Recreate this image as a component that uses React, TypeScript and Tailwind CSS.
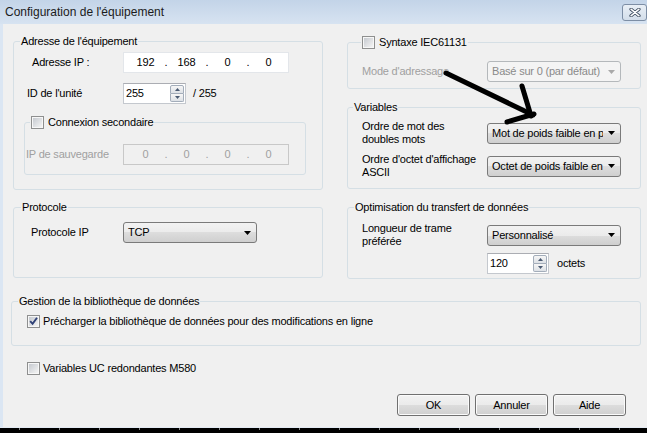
import React from "react";

const comboBg =
  "bg-[linear-gradient(to_bottom,#f2f2f2_0%,#ebebeb_50%,#dddddd_50%,#cfcfcf_100%)]";

function Check({ checked = false }: { checked?: boolean }) {
  return (
    <span className="flex h-[13px] w-[13px] shrink-0 items-center justify-center border border-[#8e8f8f] bg-[#f7f7f7]">
      <span className="relative h-[9px] w-[9px] bg-[linear-gradient(135deg,#c6cad0,#f4f4f4)]">
        {checked && (
          <svg className="absolute left-0 top-0" width="9" height="9" viewBox="0 0 9 9">
            <path d="M1.2 4.2L3.6 6.8L8 0.8" fill="none" stroke="#2f4177" strokeWidth="1.9" />
          </svg>
        )}
      </span>
    </span>
  );
}

function Spin() {
  return (
    <span className="flex w-[16px] shrink-0 flex-col p-px">
      <span className="flex flex-1 items-center justify-center rounded-t-[2px] border border-[#a3adba] bg-[linear-gradient(#f6f6f6,#dde1e6)]">
        <svg width="5" height="3" viewBox="0 0 5 3">
          <path d="M0 3L2.5 0L5 3Z" fill="#4a5a72" />
        </svg>
      </span>
      <span className="flex flex-1 items-center justify-center rounded-b-[2px] border border-t-0 border-[#a3adba] bg-[linear-gradient(#f6f6f6,#dde1e6)]">
        <svg width="5" height="3" viewBox="0 0 5 3">
          <path d="M0 0H5L2.5 3Z" fill="#4a5a72" />
        </svg>
      </span>
    </span>
  );
}

function NumBox({ value, className }: { value: string; className: string }) {
  return (
    <div className={`flex h-[21px] items-stretch border border-[#c4c8ce] border-t-[#abadb3] bg-white ${className}`}>
      <span className="flex flex-1 items-center pl-[2px]">{value}</span>
      <Spin />
    </div>
  );
}

function IpBox({ parts, disabled = false }: { parts: string[]; disabled?: boolean }) {
  return (
    <div
      className={`grid h-[21px] w-[166px] grid-cols-[1fr_4px_1fr_4px_1fr_4px_1fr] items-center pl-[3px] pr-px text-center ${
        disabled ? "border border-[#c8c8c8] bg-[#f0f0f0] text-[#a0a0a0]" : "border border-[#e3e6ea] bg-white"
      }`}
    >
      {parts.map((p, i) => (
        <React.Fragment key={i}>
          {i > 0 && <span>.</span>}
          <span>{p}</span>
        </React.Fragment>
      ))}
    </div>
  );
}

function Combo({ value, className, disabled = false }: { value: string; className: string; disabled?: boolean }) {
  return (
    <div
      className={`flex h-[21px] shrink-0 items-center rounded-[3px] border ${className} ${
        disabled ? "border-[#b4b8bb] bg-[#f4f4f4] text-[#8a8a8a]" : `border-[#7a7a7a] ${comboBg}`
      }`}
    >
      <span className="min-w-0 flex-1 overflow-hidden whitespace-nowrap pl-[4px]">{value}</span>
      <span className="flex w-[17px] shrink-0 justify-center">
        <svg width="7" height="4" viewBox="0 0 7 4">
          <path d="M0 0H7L3.5 4Z" fill={disabled ? "#a9a9a9" : "#000"} />
        </svg>
      </span>
    </div>
  );
}

function Group({
  legend,
  legendClass,
  className,
  children,
}: {
  legend: React.ReactNode;
  legendClass: string;
  className: string;
  children: React.ReactNode;
}) {
  return (
    <fieldset className={`shrink-0 rounded-[3px] border border-[#d5dfe5] ${className}`}>
      <legend className={`px-px ${legendClass}`}>
        <span className="flex h-[13px] items-center">{legend}</span>
      </legend>
      {children}
    </fieldset>
  );
}

function Btn({ children }: { children: React.ReactNode }) {
  return (
    <button
      className={`flex h-[22px] w-[73px] items-center justify-center rounded-[3px] border border-[#707070] shadow-[inset_0_0_0_1px_#fbfbfb] ${comboBg}`}
    >
      {children}
    </button>
  );
}

export default function App() {
  return (
    <div className="relative flex h-[433px] w-[647px] flex-col overflow-hidden bg-[#f0f0f0] font-['Liberation_Sans',Arial,sans-serif] text-[11px] leading-[13px] tracking-[-0.2px] text-black">
      {/* title bar */}
      <div className="flex h-[24px] shrink-0 items-center bg-[linear-gradient(to_bottom,#c3d4e8,#d7e3f1)] pl-[5px]">
        <span className="flex-1 text-[12px] tracking-[0px] text-[#1b1b1b]">Configuration de l'équipement</span>
        <span className="flex h-[17px] w-[25px] items-center justify-center rounded-[3px] border border-[#7d8ea5] bg-[linear-gradient(#e9eff6,#d3deea)]">
          <svg width="12" height="9" viewBox="0 0 12 9">
            <path d="M2 1.2L10 7.8M10 1.2L2 7.8" stroke="#3b4a5d" strokeWidth="3.2" strokeLinecap="round" />
            <path d="M2 1.2L10 7.8M10 1.2L2 7.8" stroke="#fff" strokeWidth="1.5" strokeLinecap="round" />
          </svg>
        </span>
      </div>

      {/* body */}
      <div className="flex flex-1 flex-col border-l-[3px] border-[#dbe6f3]">
        <div className="mt-[11px] flex gap-[24px] pl-[10px]">
          {/* left column */}
          <div className="flex w-[310px] flex-col gap-[11px]">
            <Group legend="Adresse de l'équipement" legendClass="ml-[6px]" className="h-[155px] w-[310px]">
              <div className="mt-[4px] flex h-[21px] items-center">
                <span className="w-[109px] shrink-0 pl-[18px]">Adresse IP :</span>
                <IpBox parts={["192", "168", "0", "0"]} />
              </div>
              <div className="mt-[10px] flex h-[21px] items-center">
                <span className="w-[109px] shrink-0 pl-[13px]">ID de l'unité</span>
                <NumBox value="255" className="w-[63px]" />
                <span className="ml-[7px]">/ 255</span>
              </div>
              <Group
                legend={
                  <>
                    <Check />
                    <span className="ml-[4px]">Connexion secondaire</span>
                  </>
                }
                legendClass="ml-[5px]"
                className="ml-[10px] mt-[12px] h-[59px] w-[282px]"
              >
                <div className="mt-[15px] flex h-[21px] items-center">
                  <span className="w-[98px] shrink-0 pl-px text-[#a0a0a0]">IP de sauvegarde</span>
                  <IpBox parts={["0", "0", "0", "0"]} disabled />
                </div>
              </Group>
            </Group>

            <Group legend="Protocole" legendClass="ml-[7px]" className="h-[77px] w-[310px]">
              <div className="mt-[8px] flex h-[21px] items-center">
                <span className="w-[109px] shrink-0 pl-[17px]">Protocole IP</span>
                <Combo value="TCP" className="w-[134px]" />
              </div>
            </Group>
          </div>

          {/* right column */}
          <div className="mt-px flex w-[294px] flex-col gap-[12px]">
            <Group
              legend={
                <>
                  <Check />
                  <span className="ml-[4px]">Syntaxe IEC61131</span>
                </>
              }
              legendClass="ml-[13px]"
              className="h-[53px] w-[294px]"
            >
              <div className="mt-[12px] flex h-[21px] items-center">
                <span className="w-[139px] shrink-0 pl-[14px] text-[#a0a0a0]">Mode d'adressage</span>
                <Combo value="Basé sur 0 (par défaut)" className="w-[134px]" disabled />
              </div>
            </Group>

            <Group legend="Variables" legendClass="ml-[5px]" className="h-[88px] w-[294px]">
              <div className="mt-[6px] flex h-[26px] items-center">
                <span className="w-[139px] shrink-0 pl-[14px]">
                  Ordre de mot des
                  <br />
                  doubles mots
                </span>
                <Combo value="Mot de poids faible en premier" className="w-[134px]" />
              </div>
              <div className="mt-[7px] flex h-[26px] items-center">
                <span className="w-[139px] shrink-0 pl-[14px]">
                  Ordre d'octet d'affichage
                  <br />
                  ASCII
                </span>
                <Combo value="Octet de poids faible en premier" className="w-[134px]" />
              </div>
            </Group>

            <Group legend="Optimisation du transfert de données" legendClass="ml-[6px]" className="h-[78px] w-[294px]">
              <div className="mt-[8px] flex h-[26px] items-center">
                <span className="w-[139px] shrink-0 pl-[14px]">
                  Longueur de trame
                  <br />
                  préférée
                </span>
                <Combo value="Personnalisé" className="w-[134px]" />
              </div>
              <div className="mt-[5px] flex h-[21px] items-center pl-[139px]">
                <NumBox value="120" className="w-[62px]" />
                <span className="ml-[8px]">octets</span>
              </div>
            </Group>
          </div>
        </div>

        <Group
          legend="Gestion de la bibliothèque de données"
          legendClass="ml-[6px]"
          className="ml-[8px] mt-[16px] h-[51px] w-[630px]"
        >
          <div className="mt-[7px] flex h-[13px] items-center pl-[15px]">
            <Check checked />
            <span className="ml-[3px]">Précharger la bibliothèque de données pour des modifications en ligne</span>
          </div>
        </Group>

        <div className="mt-[16px] flex h-[13px] items-center pl-[24px]">
          <Check />
          <span className="ml-[3px]">Variables UC redondantes M580</span>
        </div>

        <div className="mt-[19px] flex justify-end gap-[5px] pr-[21px]">
          <Btn>OK</Btn>
          <Btn>Annuler</Btn>
          <Btn>Aide</Btn>
        </div>
      </div>

      {/* strip of the window behind */}
      <div className="flex h-[6px] shrink-0 border-t border-[#e4ebf4] bg-black pl-[19px]">
        {Array.from({ length: 16 }).map((_, i) => (
          <span key={i} className="h-[2px] w-[40px] shrink-0 border-l border-[#8c8c8c]" />
        ))}
      </div>

      {/* hand-drawn arrow */}
      <svg className="pointer-events-none absolute left-0 top-0" width="647" height="433">
        <g stroke="#000" strokeWidth="5" strokeLinecap="round">
          <line x1="446" y1="73" x2="533" y2="115" />
          <line x1="522" y1="86" x2="531" y2="116" />
          <line x1="507" y1="122" x2="534" y2="114" />
        </g>
      </svg>
    </div>
  );
}
